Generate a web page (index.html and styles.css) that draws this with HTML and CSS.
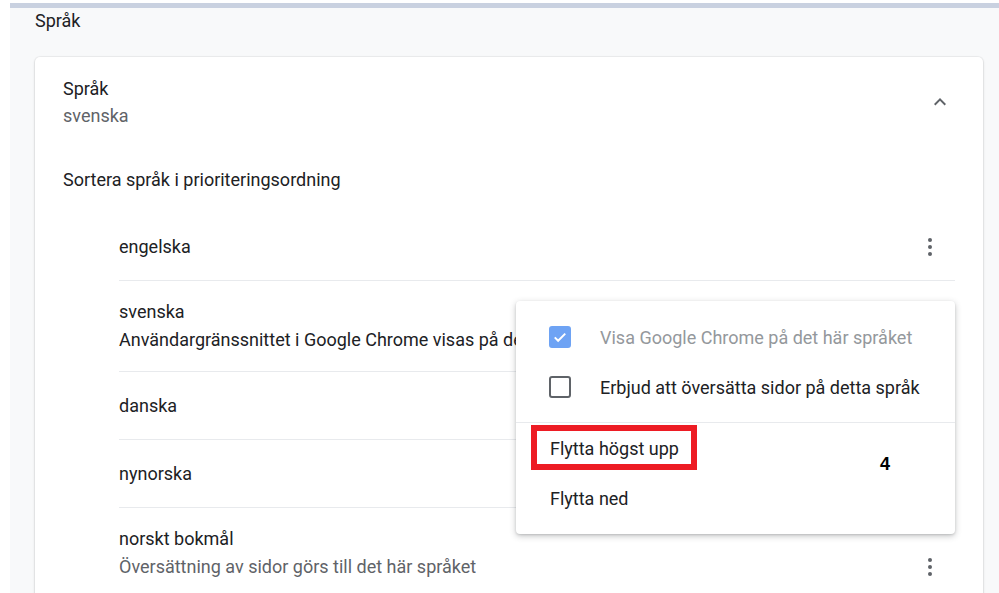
FILE: index.html
```html
<!DOCTYPE html>
<html lang="sv">
<head>
    <meta charset="UTF-8">
    <title>Språk</title>
    <link rel="stylesheet" href="styles.css">
</head>
<body>
    <div class="page">
        <h2 class="section-title">Språk</h2>

        <div class="card">
            <div class="card-header">
                <div>
                    <div class="title">Språk</div>
                    <div class="subtitle">svenska</div>
                </div>
                <svg class="chevron" viewBox="0 0 24 24" width="24" height="24">
                    <path d="M12 8l-6 6 1.41 1.41L12 10.83l4.59 4.58L18 14z" fill="#5f6368"/>
                </svg>
            </div>

            <div class="sort-label">Sortera språk i prioriteringsordning</div>

            <div class="lang-list">
                <div class="lang-row">
                    <div class="lang-text"><div>engelska</div></div>
                    <button class="kebab"><span></span><span></span><span></span></button>
                </div>
                <div class="lang-row">
                    <div class="lang-text">
                        <div>svenska</div>
                        <div>Användargränssnittet i Google Chrome visas på det här språket</div>
                    </div>
                    <button class="kebab"><span></span><span></span><span></span></button>
                </div>
                <div class="lang-row">
                    <div class="lang-text"><div>danska</div></div>
                    <button class="kebab"><span></span><span></span><span></span></button>
                </div>
                <div class="lang-row">
                    <div class="lang-text"><div>nynorska</div></div>
                    <button class="kebab"><span></span><span></span><span></span></button>
                </div>
                <div class="lang-row">
                    <div class="lang-text">
                        <div>norskt bokmål</div>
                        <div class="secondary">Översättning av sidor görs till det här språket</div>
                    </div>
                    <button class="kebab"><span></span><span></span><span></span></button>
                </div>
            </div>

            <!-- popup menu for "svenska" -->
            <div class="menu">
                <div class="menu-checks">
                    <div class="check-item disabled">
                        <span class="checkbox checked">
                            <svg viewBox="0 0 24 24" width="18" height="18">
                                <path d="M5 12.5l4.5 4.5L19 7.5" fill="none" stroke="#fff" stroke-width="2.6"/>
                            </svg>
                        </span>
                        Visa Google Chrome på det här språket
                    </div>
                    <div class="check-item">
                        <span class="checkbox"></span>
                        Erbjud att översätta sidor på detta språk
                    </div>
                </div>
                <div class="menu-item">Flytta högst upp</div>
                <div class="menu-item">Flytta ned</div>

                <div class="highlight"></div>
                <div class="step">4</div>
            </div>
        </div>
    </div>
</body>
</html>
```

FILE: styles.css
```css
html, body {
    margin: 0;
    padding: 0;
    height: 100%;
    background: #fff;
    font-family: Roboto, "Noto Sans", Arial, sans-serif;
    color: #202124;
    overflow: hidden;
}

.page {
    margin: 3px 0 0 10px;
    border-top: 5px solid #c9d1e0;
    background: #f8f9fa;
    padding: 0 16px 0 25px;
    height: 100%;
}

.section-title {
    margin: 0;
    font-size: 18px;
    font-weight: 400;
    line-height: 24px;
    padding-top: 1px;
}

.card {
    position: relative;
    margin-top: 24px;
    background: #fff;
    border-radius: 5px;
    box-shadow: 0 0 0 1px rgba(0, 0, 0, 0.04), 0 1px 3px rgba(0, 0, 0, 0.14);
    padding: 18px 0 0 28px;
    height: 600px;
    font-size: 18px;
}

.card-header {
    display: flex;
    justify-content: space-between;
    align-items: center;
    padding-right: 31px;
}

.title,
.subtitle,
.sort-label {
    line-height: 27px;
}

.subtitle {
    color: #5f6368;
}

.sort-label {
    margin-top: 37px;
}

.lang-list {
    margin: 20px 28px 0 56px;
}

.lang-row {
    display: flex;
    align-items: center;
    padding: 17px 0;
    min-height: 33px;
}

.lang-row + .lang-row {
    border-top: 1px solid #e8eaed;
}

.lang-text {
    flex: 1;
    line-height: 28px;
    white-space: nowrap;
}

.secondary {
    color: #5f6368;
}

.kebab {
    display: flex;
    flex-direction: column;
    align-items: center;
    gap: 3px;
    width: 36px;
    margin-right: 7px;
    background: none;
    border: none;
    padding: 0;
}

.kebab span {
    width: 4px;
    height: 4px;
    border-radius: 50%;
    background: #5f6368;
}

.lang-row:last-child .kebab {
    margin-top: 28px;
}

/* popup menu */
.menu {
    position: absolute;
    left: 481px;
    top: 244px;
    width: 439px;
    padding: 11px 0;
    background: #fff;
    border-radius: 4px;
    box-shadow: 0 2px 6px rgba(60, 64, 67, 0.3), 0 1px 2px rgba(60, 64, 67, 0.15);
}

.menu-checks {
    padding-bottom: 10px;
    border-bottom: 1px solid #e8eaed;
}

.check-item {
    display: flex;
    align-items: center;
    height: 50px;
    padding-left: 33px;
    gap: 29px;
    white-space: nowrap;
}

.check-item.disabled {
    color: #94989c;
}

.checkbox {
    display: flex;
    align-items: center;
    justify-content: center;
    box-sizing: border-box;
    width: 22px;
    height: 22px;
    border: 2px solid #5f6368;
    border-radius: 3px;
}

.checkbox.checked {
    background: #6ea3f4;
    border-color: #6ea3f4;
}

.menu-item {
    display: flex;
    align-items: center;
    height: 50px;
    padding-left: 34px;
}

/* annotation overlays */
.highlight {
    position: absolute;
    left: 15px;
    top: 124px;
    width: 154px;
    height: 33px;
    border: 6px solid #ed1c24;
}

.step {
    position: absolute;
    left: 364px;
    top: 153px;
    font-family: "Liberation Sans", Arial, sans-serif;
    font-weight: bold;
    font-size: 18px;
    color: #000;
}
```
